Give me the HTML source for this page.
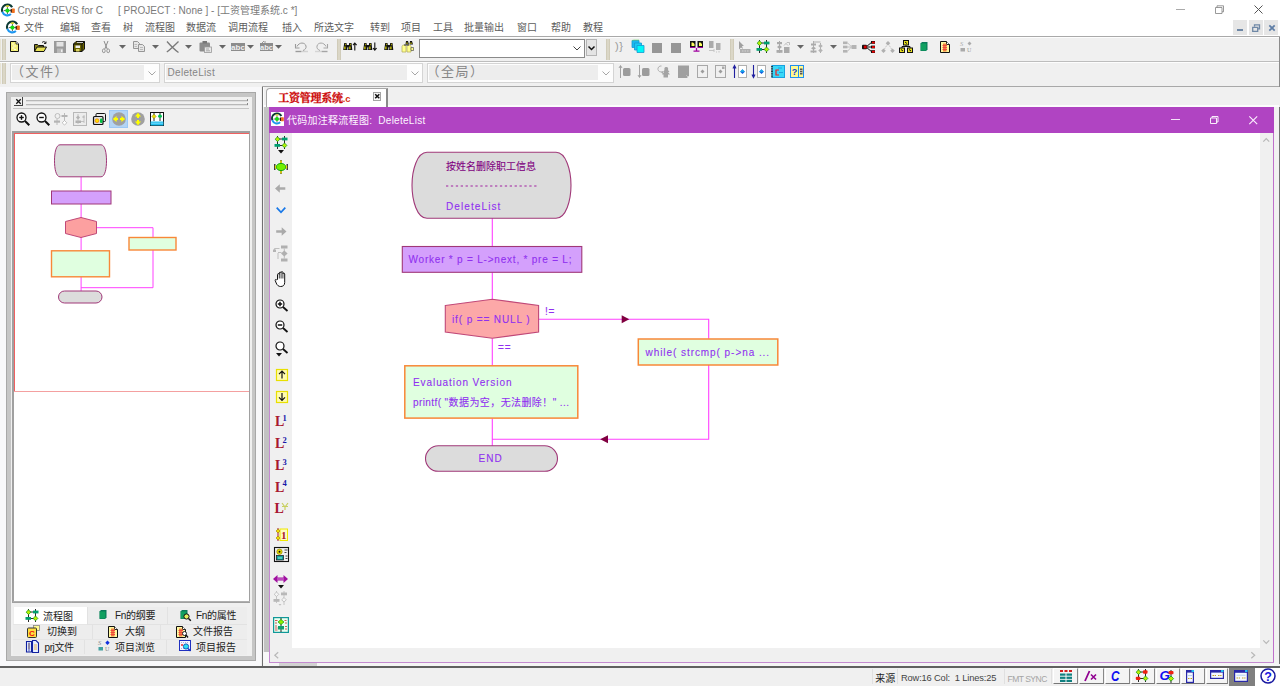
<!DOCTYPE html><html><head><meta charset="utf-8"><title>Crystal REVS for C</title><style>
*{box-sizing:border-box;margin:0;padding:0}
html,body{width:1280px;height:686px;overflow:hidden;background:#f0f0f0}
body{position:relative;font-family:"Liberation Sans","Noto Sans CJK SC",sans-serif;font-size:10px;color:#444}
.a{position:absolute}
.t{position:absolute;white-space:nowrap;line-height:1}
svg{position:absolute;overflow:visible}
.grip{position:absolute;width:4px;background:linear-gradient(90deg,#cbc6b2,#dedacb 45%,#dedacb 55%,#cbc6b2)}
.combo{position:absolute;background:#e6e6e6;border:1px solid #fbfbfb;outline:1px solid #dcdcdc;outline-offset:-2px}
</style></head><body>
<div class="a" style="left:0px;top:0px;width:1280px;height:19px;background:#fff;"></div>
<svg style="left:1.4px;top:2.7px" width="14.3" height="14.3" viewBox="0 0 14 14"><path d="M10.890 4.150A5.300 5.300 0 0 0 1.320 8.610" fill="none" stroke="#0c3a34" stroke-width="2.100"/><path d="M1.320 8.610A5.300 5.300 0 0 0 9.710 10.860" fill="none" stroke="#1e96f0" stroke-width="2"/><ellipse cx="6.300" cy="3.100" rx="1.900" ry=".8" fill="#d8d020"/><path d="M6.300 4v6.800M2.800 7.400h7" stroke="#222" stroke-width=".7"/><circle cx="6.300" cy="7.400" r="2.100" fill="#14dc14"/><rect x="9.400" y="5.800" width="1.600" height="3.600" fill="#2a1a10"/><rect x="10.600" y="5.500" width="2.900" height="4.200" rx=".6" fill="#f0701e"/></svg>
<div class="t" style="left:17.5px;top:5.5px;font-size:10px;color:#7a7a7a;">Crystal REVS for C</div>
<div class="t" style="left:118px;top:5.5px;font-size:10px;color:#7a7a7a;letter-spacing:0.02px">[ PROJECT : None ] - [工资管理系统.c *]</div>
<svg style="left:1176px;top:9px" width="9" height="1" viewBox="0 0 9 1"><rect width="9" height="1" fill="#aaa"/></svg>
<svg style="left:1215px;top:5px" width="9" height="9" viewBox="0 0 9 9"><path d="M.5 2.5h6.5v6h-6.5zM2 2.5V.8h6.5v6H7" fill="none" stroke="#808080" stroke-width=".8"/></svg>
<svg style="left:1254px;top:5px" width="9" height="9" viewBox="0 0 9 9"><path d="M.5.5l8 8M8.500 .5l-8 8" fill="none" stroke="#555" stroke-width="1"/></svg>
<div class="a" style="left:0px;top:19px;width:1280px;height:17px;background:#fff;"></div>
<div class="a" style="left:0px;top:36px;width:1280px;height:1px;background:#a9a9a9;"></div>
<svg style="left:5.8px;top:20.1px" width="14.3" height="14.3" viewBox="0 0 14 14"><path d="M10.890 4.150A5.300 5.300 0 0 0 1.320 8.610" fill="none" stroke="#0c3a34" stroke-width="2.100"/><path d="M1.320 8.610A5.300 5.300 0 0 0 9.710 10.860" fill="none" stroke="#1e96f0" stroke-width="2"/><ellipse cx="6.300" cy="3.100" rx="1.900" ry=".8" fill="#d8d020"/><path d="M6.300 4v6.800M2.800 7.400h7" stroke="#222" stroke-width=".7"/><circle cx="6.300" cy="7.400" r="2.100" fill="#14dc14"/><rect x="9.400" y="5.800" width="1.600" height="3.600" fill="#2a1a10"/><rect x="10.600" y="5.500" width="2.900" height="4.200" rx=".6" fill="#f0701e"/></svg>
<div class="t" style="left:24px;top:23px;font-size:10px;color:#5c5c5c;">文件</div>
<div class="t" style="left:60px;top:23px;font-size:10px;color:#5c5c5c;">编辑</div>
<div class="t" style="left:91px;top:23px;font-size:10px;color:#5c5c5c;">查看</div>
<div class="t" style="left:123px;top:23px;font-size:10px;color:#5c5c5c;">树</div>
<div class="t" style="left:145px;top:23px;font-size:10px;color:#5c5c5c;">流程图</div>
<div class="t" style="left:186px;top:23px;font-size:10px;color:#5c5c5c;">数据流</div>
<div class="t" style="left:228px;top:23px;font-size:10px;color:#5c5c5c;">调用流程</div>
<div class="t" style="left:282px;top:23px;font-size:10px;color:#5c5c5c;">插入</div>
<div class="t" style="left:314px;top:23px;font-size:10px;color:#5c5c5c;">所选文字</div>
<div class="t" style="left:370px;top:23px;font-size:10px;color:#5c5c5c;">转到</div>
<div class="t" style="left:401px;top:23px;font-size:10px;color:#5c5c5c;">项目</div>
<div class="t" style="left:433px;top:23px;font-size:10px;color:#5c5c5c;">工具</div>
<div class="t" style="left:464px;top:23px;font-size:10px;color:#5c5c5c;">批量输出</div>
<div class="t" style="left:517px;top:23px;font-size:10px;color:#5c5c5c;">窗口</div>
<div class="t" style="left:551px;top:23px;font-size:10px;color:#5c5c5c;">帮助</div>
<div class="t" style="left:583px;top:23px;font-size:10px;color:#5c5c5c;">教程</div>
<div class="a" style="left:1233px;top:20px;width:14px;height:15px;background:#e6e6e6;"></div>
<div class="a" style="left:1249px;top:20px;width:14px;height:15px;background:#e6e6e6;"></div>
<div class="a" style="left:1264px;top:20px;width:14px;height:15px;background:#e6e6e6;"></div>
<svg style="left:1237px;top:29px" width="6" height="2" viewBox="0 0 6 2"><rect width="6" height="2" fill="#6f88a6"/></svg>
<svg style="left:1252px;top:24px" width="8" height="8" viewBox="0 0 8 8"><path d="M2.500 2.500V.8h5v4H6M.7 3.300h5v4h-5z" fill="none" stroke="#6f88a6" stroke-width="1.300"/></svg>
<svg style="left:1269px;top:25px" width="6" height="6" viewBox="0 0 6 6"><path d="M.3.3l5.400 5.400M5.700.3L.3 5.700" fill="none" stroke="#5f7ea6" stroke-width="1.700"/></svg>
<div class="a" style="left:0px;top:37px;width:1280px;height:1px;background:#fdfdfd;"></div>
<div class="a" style="left:0px;top:61px;width:1280px;height:1px;background:#bdbdbd;"></div>
<div class="a" style="left:0px;top:62px;width:1280px;height:1px;background:#fdfdfd;"></div>
<div class="a" style="left:262px;top:86px;width:1017px;height:1px;background:#a8a8a8;"></div>
<div class="grip" style="left:2px;top:39px;height:21px"></div>
<div class="grip" style="left:336.5px;top:39px;height:21px"></div>
<div class="grip" style="left:605.5px;top:39px;height:21px"></div>
<div class="grip" style="left:730px;top:39px;height:21px"></div>
<div class="grip" style="left:2px;top:63px;height:21px"></div>
<div class="a" style="left:0px;top:39px;width:1px;height:21px;background:#e8e4d4;"></div>
<div class="a" style="left:0px;top:63px;width:1px;height:21px;background:#e8e4d4;"></div>
<div class="a" style="left:419px;top:39px;width:166px;height:19px;background:#fff;border:1px solid #8a8a8a"></div>
<svg style="left:573px;top:46px" width="8" height="5" viewBox="0 0 8 5"><path d="M.5.5l3.500 3.500l3.500-3.500" fill="none" stroke="#444" stroke-width="1"/></svg>
<div class="a" style="left:586px;top:39px;width:11px;height:17px;background:#e4e4e4;border:1px solid #b5b5b5"></div>
<svg style="left:588px;top:45.5px" width="7" height="4" viewBox="0 0 7 4"><path d="M.5.500l3 3l3-3" fill="none" stroke="#111" stroke-width="1.500"/></svg>
<div class="a" style="left:10px;top:63px;width:150px;height:19.700px;background:#fdfdfd;border:1px solid #d4d4d4"></div>
<div class="a" style="left:12px;top:65px;width:132px;height:15.200px;background:#ededed"></div>
<svg style="left:148px;top:70.5px" width="8" height="5" viewBox="0 0 8 5"><path d="M.5.5l3.500 3.500l3.500-3.500" fill="none" stroke="#a6a6a6" stroke-width="1"/></svg>
<div class="t" style="left:11px;top:65px;font-size:13px;color:#858585;letter-spacing:1.5px">（文件）</div>
<div class="a" style="left:164px;top:63px;width:258.5px;height:19.700px;background:#fdfdfd;border:1px solid #d4d4d4"></div>
<div class="a" style="left:166px;top:65px;width:240.5px;height:15.200px;background:#ededed"></div>
<svg style="left:410.5px;top:70.5px" width="8" height="5" viewBox="0 0 8 5"><path d="M.5.5l3.500 3.500l3.500-3.500" fill="none" stroke="#a6a6a6" stroke-width="1"/></svg>
<div class="t" style="left:167.5px;top:67.5px;font-size:10px;color:#858585;letter-spacing:0.3px">DeleteList</div>
<div class="a" style="left:427px;top:63px;width:186.5px;height:19.700px;background:#fdfdfd;border:1px solid #d4d4d4"></div>
<div class="a" style="left:429px;top:65px;width:168.5px;height:15.200px;background:#ededed"></div>
<svg style="left:601.5px;top:70.5px" width="8" height="5" viewBox="0 0 8 5"><path d="M.5.5l3.500 3.500l3.500-3.500" fill="none" stroke="#a6a6a6" stroke-width="1"/></svg>
<div class="t" style="left:426.5px;top:65px;font-size:13px;color:#858585;letter-spacing:1.5px">（全局）</div>
<div class="a" style="left:1279px;top:37px;width:1px;height:70px;background:#8c8c8c;"></div>
<svg style="left:10px;top:41px" width="9" height="11" viewBox="0 0 9 11"><path d="M.5.5h5.500l2.500 2.500v7.500h-8z" fill="#f4f07a" stroke="#111" stroke-width="1"/><path d="M6 .5v2.500h2.500" fill="#fff" stroke="#111" stroke-width=".8"/><path d="M2 3h2M3 5h3M2 7h2.500M4 8.500h2" stroke="#fffde0" stroke-width="1"/></svg>
<svg style="left:34px;top:41px" width="13" height="11" viewBox="0 0 13 11"><path d="M.5 10.500v-7h3l1 1h5v2" fill="#8a8420" stroke="#111" stroke-width="1"/><path d="M.5 10.500l2.500-4.500h9.500l-2.500 4.500z" fill="#e6e052" stroke="#111" stroke-width="1"/><path d="M8 1.500c1.500-1.500 3-1 3.500.5M12 .5v2h-2" fill="none" stroke="#111" stroke-width=".9"/></svg>
<svg style="left:54px;top:41px" width="12" height="12" viewBox="0 0 12 12"><rect x="0" y="0" width="12" height="12" fill="#9a9a9a"/><rect x="2.500" y="1" width="7" height="4.500" fill="#e2e2e2"/><rect x="3" y="7.500" width="6" height="4.500" fill="#b8b8b8"/><rect x="7" y="8.500" width="1.500" height="2.500" fill="#eee"/></svg>
<svg style="left:73px;top:41px" width="12" height="11" viewBox="0 0 12 11"><path d="M3 .5h8.500v7.500l-2.500 2.500h-8.500v-7.500z" fill="#6b6400" stroke="#111" stroke-width="1"/><path d="M.5 3h8.500v7.500M9 3l2.500-2.500" fill="none" stroke="#111" stroke-width="1"/><rect x="2.500" y="4.500" width="4.500" height="2.500" fill="#eee"/><rect x="3" y="8" width="3.500" height="2.500" fill="#d8d060"/><path d="M4 1.500h6" stroke="#ccc" stroke-width="1"/></svg>
<svg style="left:102px;top:41px" width="8" height="12" viewBox="0 0 8 12"><path d="M2 0l3.200 8M6 0L2.800 8" stroke="#8c8c8c" stroke-width="1" fill="none"/><ellipse cx="1.800" cy="9.800" rx="1.400" ry="1.900" fill="none" stroke="#8c8c8c" stroke-width=".9"/><ellipse cx="6.200" cy="9.800" rx="1.400" ry="1.900" fill="none" stroke="#8c8c8c" stroke-width=".9"/></svg>
<svg style="left:119px;top:45px" width="7" height="4" viewBox="0 0 7 4"><path d="M0 0h7l-3.500 3.800z" fill="#666"/></svg>
<svg style="left:133px;top:41px" width="12" height="11" viewBox="0 0 12 11"><path d="M.5.5h4l2 2v5h-6z" fill="#e6e6e6" stroke="#8c8c8c" stroke-width=".9"/><path d="M5.500 3.500h4l2 2v5h-6z" fill="#e6e6e6" stroke="#8c8c8c" stroke-width=".9"/><path d="M7 6.500h3M7 8.500h3M1.500 3.500h2.500M1.500 5.500h2.500" stroke="#b0b0b0" stroke-width=".8"/></svg>
<svg style="left:152px;top:45px" width="7" height="4" viewBox="0 0 7 4"><path d="M0 0h7l-3.500 3.800z" fill="#666"/></svg>
<svg style="left:166px;top:41px" width="14" height="12" viewBox="0 0 14 12"><path d="M1 .5C4 4 9 9 12.500 11.500M12.500 .5C9 4 5 8 .8 11" stroke="#7a7a7a" stroke-width="1.300" fill="none"/></svg>
<svg style="left:185px;top:45px" width="7" height="4" viewBox="0 0 7 4"><path d="M0 0h7l-3.500 3.800z" fill="#666"/></svg>
<svg style="left:199px;top:41px" width="13" height="12" viewBox="0 0 13 12"><rect x=".5" y="1.500" width="10.500" height="9" rx="1" fill="#8c8c8c"/><rect x="3.500" y="0" width="4.500" height="2.500" fill="#777"/><rect x="5.500" y="6" width="7" height="5.500" fill="#e8e8e8" stroke="#9a9a9a" stroke-width=".8"/><path d="M7 8h3M7 9.800h4" stroke="#999" stroke-width=".8"/></svg>
<svg style="left:219px;top:45px" width="7" height="4" viewBox="0 0 7 4"><path d="M0 0h7l-3.500 3.800z" fill="#666"/></svg>
<svg style="left:231px;top:43px" width="14" height="8" viewBox="0 0 14 8"><rect width="14" height="8" fill="#8c8c8c"/><text x="7" y="6.500" font-family="Liberation Sans,sans-serif" font-size="8" font-weight="bold" fill="#f0f0f0" text-anchor="middle">abc</text></svg>
<svg style="left:247px;top:45px" width="7" height="4" viewBox="0 0 7 4"><path d="M0 0h7l-3.500 3.800z" fill="#666"/></svg>
<svg style="left:260px;top:41px" width="13" height="10" viewBox="0 0 13 10"><rect y="2" width="13" height="8" fill="#8c8c8c"/><text x="6.500" y="8.500" font-family="Liberation Sans,sans-serif" font-size="7.500" font-weight="bold" fill="#f0f0f0" text-anchor="middle">abc</text><path d="M2 1l1.500 1.500M5 0v2M3 0l1 1" stroke="#8c8c8c" stroke-width=".9"/></svg>
<svg style="left:275px;top:45px" width="7" height="4" viewBox="0 0 7 4"><path d="M0 0h7l-3.500 3.800z" fill="#666"/></svg>
<svg style="left:295px;top:41px" width="13" height="12" viewBox="0 0 13 12"><path d="M2 5.500C4 1 10 1 11 5c.5 2-1 4-3 4.500" fill="none" stroke="#9a9a9a" stroke-width="1"/><path d="M.5 3v4h4" fill="none" stroke="#9a9a9a" stroke-width="1.100"/><path d="M.5 10.500h6" stroke="#9a9a9a" stroke-width="1.400"/><path d="M7.500 10.500h5" stroke="#b5b5b5" stroke-width="1.400" stroke-dasharray="1 1"/></svg>
<svg style="left:315px;top:41px" width="13" height="12" viewBox="0 0 13 12"><path d="M11 5.500C9 1 3 1 2 5c-.5 2 1 4 3 4.500" fill="none" stroke="#a5a5a5" stroke-width="1"/><path d="M12.500 3v4h-4" fill="none" stroke="#a5a5a5" stroke-width="1.100"/><path d="M6.500 10.500h6" stroke="#a5a5a5" stroke-width="1.400"/><path d="M.5 10.500h5" stroke="#bbb" stroke-width="1.400" stroke-dasharray="1 1"/></svg>
<svg style="left:343px;top:41.5px" width="14" height="9" viewBox="0 0 14 9"><path d="M1.200 1h2.300l1 7h-4.300zM6.200 1h2.300l.8 7h-4.300z" fill="#111"/><path d="M3 3h3.500v2.500h-3.500z" fill="#111"/><path d="M1.300 4.500h1.200v2.800h-1.200zM6.300 4.500h1.200v2.800h-1.200z" fill="#e6e000"/><path d="M2 1.800h.8v1.500h-.8zM7 1.800h.8v1.500h-.8z" fill="#c8c000"/><path d="M11.800 8.500v-7.500M10 3.200l1.800-2.200l1.800 2.200" stroke="#111" fill="none" stroke-width="1.100"/></svg>
<svg style="left:362.5px;top:41.5px" width="14" height="9" viewBox="0 0 14 9"><path d="M1.200 1h2.300l1 7h-4.300zM6.200 1h2.300l.8 7h-4.300z" fill="#111"/><path d="M3 3h3.500v2.500h-3.500z" fill="#111"/><path d="M1.300 4.500h1.200v2.800h-1.200zM6.300 4.500h1.200v2.800h-1.200z" fill="#e6e000"/><path d="M2 1.800h.8v1.500h-.8zM7 1.800h.8v1.500h-.8z" fill="#c8c000"/><path d="M11.800 .5v7.500M10 6l1.800 2.200l1.800-2.200" stroke="#111" fill="none" stroke-width="1.100"/></svg>
<svg style="left:384px;top:41.5px" width="14" height="9" viewBox="0 0 14 9"><path d="M1.200 1h2.300l1 7h-4.300zM6.200 1h2.300l.8 7h-4.300z" fill="#111"/><path d="M3 3h3.500v2.500h-3.500z" fill="#111"/><path d="M1.300 4.500h1.200v2.800h-1.200zM6.300 4.500h1.200v2.800h-1.200z" fill="#e6e000"/><path d="M2 1.800h.8v1.500h-.8zM7 1.800h.8v1.500h-.8z" fill="#c8c000"/></svg>
<svg style="left:401px;top:40px" width="13" height="13" viewBox="0 0 13 13"><path d="M5 1h2l1 3.500h-3.500zM9 1h2l1 3.500h-3.500z" fill="#111"/><path d="M5.500 2.500h1v1.500h-1zM9.500 2.500h1v1.500h-1z" fill="#e6e000"/><path d="M1 6.500c0-2 4-2 4 0v5.500h-4zM6 6.500c0-2 4-2 4 0v5.500h-4z" fill="#ffff8c" stroke="#b8b060" stroke-width=".8"/><path d="M10 7.500h2.500v3h-2.500z" fill="#ffff8c" stroke="#555" stroke-width=".7"/><path d="M3 5h5" stroke="#333" stroke-width="1"/></svg>
<div class="t" style="left:615px;top:41px;font-size:11px;color:#9a9a9a;letter-spacing:.5px">)}</div>
<svg style="left:631px;top:40px" width="14" height="13" viewBox="0 0 14 13"><path d="M1 .5h7v7h-7z" fill="#17b8f0" stroke="#1598d0" stroke-width=".8"/><path d="M3.500 3h7v7h-7z" fill="#17c8f8" stroke="#1598d0" stroke-width=".8"/><path d="M6 5.500h7v7h-7z" fill="#00f8f8" stroke="#1598d0" stroke-width=".8"/><path d="M1 .5l2-.5h5" stroke="#6ad86a" stroke-width=".6" fill="none"/></svg>
<div class="a" style="left:651.5px;top:43px;width:10.5px;height:9.5px;background:#969696;"></div>
<div class="a" style="left:671px;top:43px;width:9.5px;height:9.5px;background:#969696;"></div>
<svg style="left:690px;top:41px" width="13" height="11" viewBox="0 0 13 11"><rect x="0" y="0" width="5.500" height="6" fill="#111"/><rect x="7.500" y="0" width="5.500" height="6" fill="#111"/><path d="M1.500 1.500h1.500l1.500 1.500v2h-3zM9 1.500h1.500l1.500 1.500v2h-3z" fill="#ffff60"/><path d="M0 6.500h5.500M7.500 6.500h5.500" stroke="#a000a0" stroke-width="1.200"/><path d="M6.500 7v3M3.500 10.200h6" stroke="#a000a0" stroke-width="1.300"/></svg>
<svg style="left:708px;top:41px" width="13" height="12" viewBox="0 0 13 12"><rect x="1" y="0" width="4.500" height="7" fill="#aaa"/><rect x="8" y="2" width="4.500" height="7" fill="#b0b0b0"/><path d="M1 9.500h5M6 8v3M8 11h1M11 10v1.500" stroke="#c0c0c0" stroke-width=".9"/></svg>
<svg style="left:738px;top:41px" width="13" height="12" viewBox="0 0 13 12"><path d="M1 0v8.500l2-2l2 1.500l-1-3h2z" fill="#a0a0a0"/><rect x="2" y="8" width="10.500" height="4" fill="#b0b0b0"/><path d="M4 10h7" stroke="#ddd" stroke-width=".8" stroke-dasharray="1.500 1"/></svg>
<svg style="left:756px;top:40px" width="14" height="13" viewBox="0 0 14 13"><path d="M3.500 0v13M10.500 0v13M3.500 3h7M3.500 9.500h7" stroke="#111" stroke-width=".9" fill="none"/><path d="M3.500 .8l2.400 2.400l-2.400 2.400l-2.400-2.400z" fill="#b8f000" stroke="#18a018" stroke-width=".8"/><path d="M10.500 7l2.400 2.400l-2.400 2.400l-2.400-2.400z" fill="#b8f000" stroke="#18a018" stroke-width=".8"/><rect x="8" y="1.600" width="5.500" height="2.800" fill="#00a070"/><rect x=".5" y="8" width="5.500" height="2.800" fill="#00a070"/></svg>
<svg style="left:776px;top:41px" width="14" height="12" viewBox="0 0 14 12"><path d="M3.500 0v12" stroke="#aaa" stroke-width="1"/><rect x="1" y="1" width="5" height="2.200" fill="#aaa"/><path d="M3.500 4l2.500 2l-2.500 2l-2.500-2z" fill="#aaa"/><rect x=".5" y="9" width="6" height="2.800" fill="#aaa"/><rect x="8" y="6" width="5.500" height="6" fill="#aaa"/><path d="M8 4.500l3-3h2.500v2.500M10 2.500l2 2" stroke="#b8b8b8" stroke-width=".9" fill="none"/></svg>
<svg style="left:797px;top:45px" width="7" height="4" viewBox="0 0 7 4"><path d="M0 0h7l-3.500 3.800z" fill="#666"/></svg>
<svg style="left:810px;top:41px" width="14" height="12" viewBox="0 0 14 12"><path d="M3.500 0v12M10.500 2v10M3.500 1h7" stroke="#b0b0b0" stroke-width="1" fill="none"/><rect x="1" y="2.500" width="5" height="2" fill="#aaa"/><path d="M3.500 5.500l2.500 1.800l-2.500 1.800l-2.500-1.800z" fill="#aaa"/><rect x=".5" y="9.500" width="6" height="2" fill="#aaa"/><path d="M10.500 3l2.300 2l-2.300 2l-2.300-2zM10.500 7.500l2.300 2l-2.300 2l-2.300-2z" fill="#b4b4b4"/></svg>
<svg style="left:830px;top:45px" width="7" height="4" viewBox="0 0 7 4"><path d="M0 0h7l-3.500 3.800z" fill="#666"/></svg>
<svg style="left:843px;top:41px" width="14" height="12" viewBox="0 0 14 12"><rect x="0" y=".5" width="4.500" height="2.600" fill="#b4b4b4"/><rect x="0" y="4.700" width="4.500" height="2.600" fill="#b4b4b4"/><rect x="0" y="9" width="4.500" height="2.600" fill="#b4b4b4"/><rect x="8.500" y="4" width="5" height="4" fill="#b4b4b4"/><path d="M4.500 1.800l4 4l-4 4.500M4.500 6h4" stroke="#bcbcbc" stroke-width=".9" fill="none"/></svg>
<svg style="left:862px;top:41px" width="13" height="12" viewBox="0 0 13 12"><path d="M4 6l6-5M4 6h6M4 6l6 5" stroke="#111" stroke-width="1" fill="none"/><rect x="0" y="3.800" width="5" height="4.400" rx="1" fill="#111"/><rect x="1.800" y="4.600" width="2.800" height="2.800" fill="#e00000"/><rect x="9" y="0" width="4" height="2.800" fill="#111"/><rect x="9" y="4.600" width="4" height="2.800" fill="#111"/><rect x="9" y="9.200" width="4" height="2.800" fill="#111"/><rect x="10" y=".6" width="2.800" height="1.800" fill="#f00000"/><rect x="10" y="5.200" width="2.800" height="1.800" fill="#f00000"/><rect x="10" y="9.800" width="2.800" height="1.800" fill="#f00000"/></svg>
<svg style="left:881px;top:41px" width="14" height="12" viewBox="0 0 14 12"><path d="M7 2.500l-4.500 7M7 2.500l4.500 7" stroke="#bbb" stroke-width=".9" stroke-dasharray="1.500 1" fill="none"/><path d="M7 0l2.300 2.300l-2.300 2.300l-2.300-2.300zM2.500 7.400l2.300 2.300l-2.300 2.300l-2.300-2.300zM11.500 7.400l2.300 2.300l-2.300 2.300l-2.300-2.300z" fill="#b0b0b0"/></svg>
<svg style="left:899px;top:40px" width="14" height="13" viewBox="0 0 14 13"><path d="M7 4v2.500M3 8v-1.500h8v1.500" stroke="#111" stroke-width="1" fill="none"/><rect x="4.500" y=".5" width="5" height="4.500" fill="#e8e020" stroke="#111" stroke-width="1"/><rect x=".5" y="8" width="5" height="4.500" fill="#e8e020" stroke="#111" stroke-width="1"/><rect x="8.500" y="8" width="5" height="4.500" fill="#e8e020" stroke="#111" stroke-width="1"/><path d="M6 2l2 1.500M2 9.500l2 1.500M10 9.500l2 1.500" stroke="#111" stroke-width="1"/></svg>
<svg style="left:920px;top:42px" width="8" height="9" viewBox="0 0 8 9"><path d="M.5 1.500l1.500-1.500h5.500v7.500l-1.500 1.500h-5.500z" fill="#0a7a5a"/><rect x=".8" y="1.500" width="5.500" height="7" fill="#10a060"/></svg>
<svg style="left:940px;top:41px" width="10" height="12" viewBox="0 0 10 12"><path d="M.5.500h6l3 3v8h-9z" fill="#fff8a0" stroke="#111" stroke-width="1"/><path d="M6.500 .5v3h3" fill="#fff" stroke="#111" stroke-width=".9"/><rect x="3" y="2.500" width="3.500" height="8" fill="#f08040"/><path d="M2.500 4.500h4.500M2.500 6.500h4.500M2.500 8.500h4.500" stroke="#f04040" stroke-width=".9"/></svg>
<svg style="left:960px;top:41px" width="13" height="12" viewBox="0 0 13 12"><text x="0" y="5" font-family="Liberation Serif,serif" font-style="italic" font-size="6.500" fill="#aaa">S</text><path d="M9.500 .5l2 2l-2 2l-2-2z" fill="#aaa"/><rect x=".5" y="7" width="4.500" height="3.500" fill="#aaa"/><text x="7" y="11" font-family="Liberation Serif,serif" font-size="6" fill="#999">U</text></svg>
<svg style="left:619px;top:65px" width="12" height="13" viewBox="0 0 12 13"><path d="M1.500 1v12M0 3l1.500-2.500l1.500 2.500" stroke="#9a9a9a" stroke-width=".9" fill="none"/><rect x="4" y="3" width="7.500" height="8" rx="1.500" fill="#9c9c9c"/></svg>
<svg style="left:638px;top:65px" width="12" height="13" viewBox="0 0 12 13"><path d="M1.500 0v12M0 10l1.500 2.500l1.500-2.500" stroke="#9a9a9a" stroke-width=".9" fill="none"/><rect x="4" y="3" width="7.500" height="8" rx="1.500" fill="#9c9c9c"/></svg>
<svg style="left:657px;top:65px" width="14" height="13" viewBox="0 0 14 13"><path d="M4.500 1a3 3 0 1 0 1 5.500" fill="none" stroke="#aaa" stroke-width=".9"/><path d="M4 7.500l2-1.500v3z" fill="#aaa"/><path d="M9.500 2c1.500 0 2 1.500 1.500 3l1.500 2h-1.500l2 2.500h-2v3h-4.500v-3h-1.500l2-2.500h-1l1.500-2c-.5-1.500 0-3 1.500-3z" fill="#a4a4a4"/></svg>
<svg style="left:678px;top:65px" width="12" height="13" viewBox="0 0 12 13"><path d="M0 .5h11v10l-2 2.500h-9z" fill="#a0a0a0"/><path d="M8.500 10.500l1.200 1.200" stroke="#ddd" stroke-width="1"/></svg>
<svg style="left:697px;top:65px" width="11" height="13" viewBox="0 0 11 13"><rect x="0.5" y="0.5" width="10" height="12" fill="none" stroke="#a8a8a8" stroke-width="1"/><path d="M5.500 4.500l2 2l-2 2l-2-2z" fill="#9c9c9c"/></svg>
<svg style="left:715px;top:65px" width="11" height="13" viewBox="0 0 11 13"><rect x="0.5" y="0.5" width="10" height="12" fill="none" stroke="#a8a8a8" stroke-width="1"/><path d="M5.500 4.500l2 2l-2 2l-2-2z" fill="#9c9c9c"/><rect x="7" y="1.500" width="2.500" height="2.500" fill="#aaa"/></svg>
<svg style="left:733px;top:65px" width="14" height="13" viewBox="0 0 14 13"><path d="M1.500 1v12M0 3.500l1.500-3l1.500 3" stroke="#2020a0" stroke-width="1.100" fill="none"/><rect x="5.5" y="0.5" width="8" height="12" fill="#fff" stroke="#b0b0b0" stroke-width="1"/><path d="M9.500 4.300l2.400 2.400l-2.400 2.400l-2.400-2.400z" fill="#1060e0"/><path d="M9.500 4.300l2.400 2.400h-4.800z" fill="#18b0e8"/></svg>
<svg style="left:752px;top:65px" width="14" height="13" viewBox="0 0 14 13"><path d="M1.500 0v12M0 9.500l1.500 3l1.500-3" stroke="#2020a0" stroke-width="1.100" fill="none"/><rect x="5.5" y="0.5" width="8" height="12" fill="#fff" stroke="#b0b0b0" stroke-width="1"/><path d="M9.500 4.300l2.400 2.400l-2.400 2.400l-2.400-2.400z" fill="#1060e0"/><path d="M9.500 4.300l2.400 2.400h-4.800z" fill="#18b0e8"/></svg>
<svg style="left:771px;top:65px" width="14" height="13" viewBox="0 0 14 13"><rect x="1" y=".5" width="12.500" height="12" fill="#38d8f8" stroke="#18a0e0" stroke-width="1"/><path d="M1 1v11.500" stroke="#222" stroke-width="1.600" stroke-dasharray="1 .7"/><path d="M8 5h-3v5h3" fill="none" stroke="#f02020" stroke-width="1.200"/><path d="M7 3h4M8 7.500h4" stroke="#1898d8" stroke-width=".8"/></svg>
<svg style="left:790px;top:65px" width="14" height="13" viewBox="0 0 14 13"><rect x=".5" y=".5" width="13" height="12" fill="#fffa90" stroke="#2090f0" stroke-width="1"/><path d="M8.500 .5v12" stroke="#2090f0" stroke-width="1"/><text x="4.500" y="9.500" font-family="Liberation Sans,sans-serif" font-weight="bold" font-size="9" fill="#1040d0" text-anchor="middle">?</text><rect x="10" y="3.500" width="2.500" height="6" fill="#555"/><path d="M10 5.500h2.500M10 7.500h2.500" stroke="#ffe" stroke-width=".6"/></svg>
<div class="a" style="left:0px;top:87px;width:261px;height:579px;background:#f8f8fa;"></div>
<div class="a" style="left:6px;top:92px;width:250px;height:568.5px;background:#a8a8a8;"></div>
<div class="a" style="left:6.7px;top:92.7px;width:248.6px;height:567.1px;background:#c6c6c6;"></div>
<div class="a" style="left:11px;top:97px;width:241px;height:558.5px;background:#f0f0f0;"></div>
<div class="a" style="left:14px;top:97px;width:9px;height:9px;background:#f0f0f0;border-right:1px solid #444;border-bottom:1px solid #444"></div>
<svg style="left:15.5px;top:99px" width="5" height="5" viewBox="0 0 5 5"><path d="M.3.3l4.400 4.400M4.700.3L.3 4.700" stroke="#111" stroke-width="1.300" fill="none"/></svg>
<div class="a" style="left:26px;top:100px;width:222px;height:1px;background:#b8b8b8;"></div>
<div class="a" style="left:26px;top:101px;width:222px;height:1px;background:#e0e0e0;"></div>
<div class="a" style="left:26px;top:104px;width:222px;height:1px;background:#b8b8b8;"></div>
<div class="a" style="left:26px;top:105px;width:222px;height:1px;background:#e0e0e0;"></div>
<div class="a" style="left:247px;top:99px;width:1px;height:2px;background:#888;"></div>
<div class="a" style="left:247px;top:103px;width:1px;height:2px;background:#888;"></div>
<div class="a" style="left:13px;top:108px;width:236px;height:1px;background:#c4c4c4;"></div>
<svg style="left:16px;top:112px" width="14" height="14" viewBox="0 0 14 14"><circle cx="5.500" cy="5.500" r="4.500" fill="#fff" stroke="#111" stroke-width="1.300"/><path d="M9 9l4.300 4.300" stroke="#111" stroke-width="2"/><path d="M3.200 5.500h4.600" stroke="#111" stroke-width="1.400"/><path d="M5.500 3.200v4.600" stroke="#111" stroke-width="1.400"/></svg>
<svg style="left:36px;top:112px" width="14" height="14" viewBox="0 0 14 14"><circle cx="5.500" cy="5.500" r="4.500" fill="#fff" stroke="#111" stroke-width="1.300"/><path d="M9 9l4.300 4.300" stroke="#111" stroke-width="2"/><path d="M3.200 5.500h4.600" stroke="#111" stroke-width="1.400"/></svg>
<svg style="left:54px;top:113px" width="14" height="13" viewBox="0 0 14 13"><circle cx="3.500" cy="3" r="2.500" fill="none" stroke="#b8b8b8" stroke-width=".9"/><path d="M3 6v6M10.500 0v9" stroke="#b4b4b4" stroke-width=".9"/><rect x="7.500" y="2" width="6" height="2" fill="#b4b4b4"/><rect x="0" y="7.500" width="6" height="2.200" fill="#b4b4b4"/><path d="M10.500 7.500l2.300 2.300l-2.300 2.300l-2.300-2.300z" fill="#fff" stroke="#b4b4b4" stroke-width=".8"/></svg>
<svg style="left:73px;top:112px" width="14" height="14" viewBox="0 0 14 14"><rect x=".5" y=".5" width="13" height="13" fill="#ececec" stroke="#b8b8b8" stroke-width="1"/><path d="M5 3.500l2 2l-2 2l-2-2z" fill="#b0b0b0"/><rect x="2.500" y="8.500" width="5.500" height="2.500" fill="#b0b0b0"/><path d="M5 2v10M11 3v8M8 9.500h3" stroke="#b8b8b8" stroke-width=".8"/><rect x="9.500" y="4" width="2" height="2" fill="#c0c0c0"/></svg>
<svg style="left:93px;top:113px" width="13" height="12" viewBox="0 0 13 12"><rect x="3" y=".5" width="9.500" height="8" rx="1" fill="#eee" stroke="#111" stroke-width="1"/><rect x=".5" y="3.500" width="9.500" height="8" rx="1" fill="#ddd" stroke="#111" stroke-width="1.200"/><circle cx="4" cy="7.700" r="1.900" fill="#ffe000" stroke="#f08000" stroke-width=".7"/><rect x="7" y="5.500" width="2.500" height="4.500" rx="1" fill="#00c040"/></svg>
<div class="a" style="left:109px;top:110px;width:19px;height:18px;background:#b4d4f4;border:1px solid #9cc8f6"></div>
<svg style="left:112px;top:112px" width="14" height="14" viewBox="0 0 14 14"><circle cx="7" cy="7" r="6.800" fill="#a0a0a0"/><path d="M.8 7l3.800-3v2h4.800v-2l3.800 3l-3.800 3v-2h-4.800v2z" fill="#ffff00"/><rect x="6" y="5" width="2" height="4" fill="#a0a0a0"/></svg>
<svg style="left:131px;top:112px" width="14" height="14" viewBox="0 0 14 14"><circle cx="7" cy="7" r="6.800" fill="#a0a0a0"/><path d="M7 .8l3 3.800h-2v4.800h2l-3 3.800l-3-3.800h2v-4.800h-2z" fill="#ffff00"/><rect x="5" y="6" width="4" height="2" fill="#a0a0a0"/></svg>
<svg style="left:150px;top:112px" width="14" height="14" viewBox="0 0 14 14"><rect x=".5" y=".5" width="13" height="13" fill="#fff" stroke="#111" stroke-width="1"/><path d="M4 0v9M10 0v9" stroke="#111" stroke-width=".9"/><path d="M4 2.200l2.200 2.200l-2.200 2.200l-2.200-2.200z" fill="#f0e000" stroke="#808000" stroke-width=".5"/><ellipse cx="10" cy="4.200" rx="2" ry="1.600" fill="#00c050"/><rect x=".5" y="9.500" width="13" height="4" fill="#20c0f0"/><path d="M1 11.200h12" stroke="#90e0ff" stroke-width=".8"/></svg>
<div class="a" style="left:12px;top:131px;width:238px;height:471.5px;background:#a0a0a0;"></div>
<div class="a" style="left:14px;top:133px;width:235px;height:468.5px;background:#fff;"></div>
<div class="a" style="left:14px;top:133px;width:235px;height:1px;background:#f06060;"></div>
<div class="a" style="left:14px;top:133px;width:1px;height:258.5px;background:#f06060;"></div>
<div class="a" style="left:14px;top:391px;width:235px;height:1px;background:#f4a0a0;"></div>
<div class="a" style="left:13px;top:601px;width:237px;height:1px;background:#b0b0b0;"></div>
<svg style="left:14px;top:133px" width="235" height="260" viewBox="0 0 235 260"><path d="M67.100 44v14M67.100 71v14M67.100 104v13M67.100 144v14M82 94.700h57v60h-71.900" fill="none" stroke="#ff40ff" stroke-width="1"/><path d="M46 11.800h41c4 0 5.500 8.200 5.500 16s-1.500 16-5.500 16h-41c-4 0-5.500-8.200-5.500-16s1.500-16 5.500-16z" fill="#dcdcdc" stroke="#a03878" stroke-width="1"/><rect x="37.500" y="58" width="59.500" height="13" fill="#d4a0fc" stroke="#a03878" stroke-width="1"/><path d="M51.500 88.500l15.500-4l15.500 4v12l-15.500 4l-15.500-4z" fill="#fca0a0" stroke="#c04878" stroke-width="1"/><rect x="115" y="104.500" width="47" height="12.500" fill="#e0ffe0" stroke="#f88838" stroke-width="1.400"/><rect x="37.500" y="117.800" width="58" height="26" fill="#e0ffe0" stroke="#f88838" stroke-width="1.400"/><rect x="44.500" y="158" width="43.500" height="12" rx="6" fill="#dcdcdc" stroke="#a03878" stroke-width="1"/></svg>
<div class="a" style="left:13px;top:607px;width:234px;height:48px;background:#ededed;"></div>
<div class="a" style="left:13.5px;top:607px;width:73px;height:17px;background:#fff;"></div>
<div class="a" style="left:87px;top:607px;width:1px;height:17px;background:#e2e2e2;"></div>
<div class="a" style="left:167px;top:607px;width:1px;height:17px;background:#e2e2e2;"></div>
<div class="a" style="left:92px;top:624px;width:1px;height:15px;background:#e2e2e2;"></div>
<div class="a" style="left:160px;top:624px;width:1px;height:15px;background:#e2e2e2;"></div>
<div class="a" style="left:84px;top:639px;width:1px;height:15px;background:#e2e2e2;"></div>
<div class="a" style="left:166px;top:639px;width:1px;height:15px;background:#e2e2e2;"></div>
<div class="a" style="left:13px;top:623.5px;width:234px;height:1px;background:#e6e6e6;"></div>
<div class="a" style="left:13px;top:638.5px;width:234px;height:1px;background:#e6e6e6;"></div>
<div class="a" style="left:87px;top:623.5px;width:160px;height:1px;background:#e2e2e2;"></div>
<svg style="left:25px;top:609px" width="14" height="13" viewBox="0 0 14 13"><path d="M3.500 0v13M10.500 0v13M3.500 3h7M3.500 9.500h7" stroke="#111" stroke-width=".9" fill="none"/><path d="M3.500 .8l2.400 2.400l-2.400 2.400l-2.400-2.400z" fill="#b8f000" stroke="#18a018" stroke-width=".8"/><path d="M10.500 7l2.400 2.400l-2.400 2.400l-2.400-2.400z" fill="#b8f000" stroke="#18a018" stroke-width=".8"/><rect x="8" y="1.600" width="5.500" height="2.800" fill="#00a070"/><rect x=".5" y="8" width="5.500" height="2.800" fill="#00a070"/></svg>
<div class="t" style="left:43px;top:611.5px;font-size:10px;color:#222;">流程图</div>
<svg style="left:99px;top:610px" width="8" height="9" viewBox="0 0 8 9"><path d="M.5 1.500l1.500-1.500h5.500v7.500l-1.500 1.500h-5.500z" fill="#0a7a5a"/><rect x=".8" y="1.500" width="5.500" height="7" fill="#10a060"/></svg>
<div class="t" style="left:115px;top:611px;font-size:10px;color:#222;letter-spacing:-.3px">Fn的纲要</div>
<svg style="left:180px;top:610px" width="11" height="11" viewBox="0 0 11 11"><path d="M.5 1.500l1.500-1.500h5.500v7.500l-1.500 1.500h-5.500z" fill="#0a7a5a"/><rect x=".8" y="1.500" width="5.500" height="7" fill="#10a060"/><circle cx="6.500" cy="6.500" r="2.600" fill="#e0f060" stroke="#111" stroke-width="1"/><path d="M8.500 8.500l2.300 2.300" stroke="#111" stroke-width="1.500"/></svg>
<div class="t" style="left:196px;top:611px;font-size:10px;color:#222;letter-spacing:-.3px">Fn的属性</div>
<svg style="left:27px;top:625px" width="13" height="13" viewBox="0 0 13 13"><rect x="6.500" y=".5" width="6" height="5" fill="#fffa90" stroke="#888" stroke-width=".8"/><rect x=".5" y="3" width="9" height="9.500" rx="1" fill="#ffe040" stroke="#333" stroke-width="1"/><text x="5" y="11" font-family="Liberation Sans,sans-serif" font-size="8" font-weight="bold" fill="#f01010" text-anchor="middle">C</text></svg>
<div class="t" style="left:47px;top:626.7px;font-size:10px;color:#222;">切换到</div>
<svg style="left:108px;top:625.5px" width="10" height="12" viewBox="0 0 10 12"><path d="M.5.500h6l3 3v8h-9z" fill="#fff8a0" stroke="#111" stroke-width="1"/><path d="M6.500 .5v3h3" fill="#fff" stroke="#111" stroke-width=".9"/><rect x="3" y="2.500" width="3.500" height="8" fill="#f08040"/><path d="M2.500 4.500h4.500M2.500 6.500h4.500M2.500 8.500h4.500" stroke="#f04040" stroke-width=".9"/></svg>
<div class="t" style="left:125px;top:626.7px;font-size:10px;color:#222;">大纲</div>
<svg style="left:176px;top:625.5px" width="10" height="12" viewBox="0 0 10 12"><path d="M.5.500h6l3 3v8h-9z" fill="#fff8a0" stroke="#111" stroke-width="1"/><path d="M6.500 .5v3h3" fill="#fff" stroke="#111" stroke-width=".9"/><rect x="3" y="2.500" width="3.500" height="8" fill="#f08040"/><path d="M2.500 4.500h4.500M2.500 6.500h4.500M2.500 8.500h4.500" stroke="#f04040" stroke-width=".9"/></svg>
<svg style="left:182px;top:631px" width="6" height="7" viewBox="0 0 6 7"><circle cx="2.500" cy="2.500" r="2" fill="#fff" stroke="#111" stroke-width=".9"/><path d="M4 4l2 2.500" stroke="#111" stroke-width="1.300"/></svg>
<div class="t" style="left:193px;top:626.7px;font-size:10px;color:#222;">文件报告</div>
<svg style="left:26px;top:640px" width="13" height="13" viewBox="0 0 13 13"><path d="M.5 1.500h5v10.500h-5zM6.500 .5h3.500l2.500 2.500v9.500h-6z" fill="#e8f0ff" stroke="#1020a0" stroke-width="1.100"/><path d="M2 4h2M2 6h2M2 8h2M8 5h3M8 7h3M8 9h3" stroke="#e0a030" stroke-width=".8"/><path d="M3 2.500v9" stroke="#1020a0" stroke-width=".8"/></svg>
<div class="t" style="left:44.5px;top:642.5px;font-size:10px;color:#222;letter-spacing:-.4px">prj文件</div>
<svg style="left:97.5px;top:640px" width="13" height="13" viewBox="0 0 13 13"><text x="0" y="5" font-family="Liberation Serif,serif" font-style="italic" font-size="6.500" fill="#888">S</text><path d="M9.500 .5l2.200 2.200l-2.200 2.200l-2.200-2.200z" fill="#1030e0"/><rect x=".5" y="7" width="4.500" height="3.500" fill="#40a0a0"/><text x="7" y="11" font-family="Liberation Serif,serif" font-size="6" fill="#888">U</text></svg>
<div class="t" style="left:115px;top:642.5px;font-size:10px;color:#222;">项目浏览</div>
<svg style="left:179px;top:640px" width="13" height="12" viewBox="0 0 13 12"><rect x=".5" y=".5" width="11" height="10" fill="#f8f8ff" stroke="#2030c0" stroke-width="1"/><path d="M2 2.500h8M2 8.500h4" stroke="#9090d0" stroke-width=".7" stroke-dasharray="1 1"/><circle cx="7" cy="6.500" r="2.600" fill="#30e0f0" stroke="#1060c0" stroke-width="1"/><path d="M9 8.500l2.500 2.500" stroke="#1030c0" stroke-width="1.400"/><rect x="2" y="4" width="2" height="2" fill="#f06060"/></svg>
<div class="t" style="left:196px;top:642.5px;font-size:10px;color:#222;">项目报告</div>
<div class="a" style="left:263px;top:87px;width:1017px;height:580px;background:#f0f0f0;"></div>
<div class="a" style="left:261.5px;top:87px;width:1.5px;height:580px;background:#707070;"></div>
<div class="a" style="left:263px;top:87px;width:1px;height:20px;background:#fcfcfc;"></div>
<div class="a" style="left:1279px;top:107px;width:1px;height:557px;background:#707070;"></div>
<div class="a" style="left:263px;top:105px;width:1016px;height:2px;background:#fcfcfc;"></div>
<div class="a" style="left:263.5px;top:107px;width:5px;height:545px;background:#c2c2c2;"></div>
<div class="a" style="left:263px;top:652px;width:6px;height:14.5px;background:#f8f8f8;"></div>
<div class="a" style="left:1274px;top:107px;width:5px;height:560px;background:#f2f2f2;"></div>
<div class="a" style="left:263px;top:663px;width:1016px;height:3.5px;background:#f5f5f5;"></div>
<div class="a" style="left:279px;top:663px;width:38px;height:2.5px;background:#d2d2d2;"></div>
<div class="a" style="left:266px;top:88px;width:122px;height:18.500px;background:#fff;border:1px solid #a8a8a8;border-bottom:none;border-right:2px solid #8a8a8a;border-radius:4px 0 0 0"></div>
<div class="t" style="left:278.3px;top:93px;font-size:11px;color:#cc0808;font-weight:bold;font-family:'Liberation Sans','Noto Serif CJK SC',serif;letter-spacing:-.25px;-webkit-text-stroke:.3px #cc0808">工资管理系统<span style="font-family:'Liberation Sans',sans-serif;font-size:9.500px;color:#d83010;-webkit-text-stroke:0">.c</span></div>
<div class="a" style="left:372.500px;top:92px;width:8.500px;height:8.500px;background:#f6f6f6;border:1px solid #a4a4a4"></div>
<svg style="left:374.5px;top:94px" width="4.5" height="4.5" viewBox="0 0 4.5 4.5"><path d="M.2.200l4.100 4.100M4.300.2L.2 4.300" stroke="#111" stroke-width="1.500" fill="none"/></svg>
<div class="a" style="left:268.5px;top:106.5px;width:1005.5px;height:556px;background:#c48ad0;"></div>
<div class="a" style="left:268.5px;top:106.5px;width:1005.5px;height:26px;background:#b044c2;"></div>
<div class="a" style="left:270px;top:132.5px;width:1002.5px;height:529px;background:#f0f0f0;"></div>
<div class="a" style="left:292px;top:132.5px;width:968px;height:515.5px;background:#fff;"></div>
<div class="a" style="left:1273px;top:132.5px;width:1px;height:529px;background:#c070cc;"></div>
<div class="a" style="left:271px;top:112px;width:13px;height:14px;background:#fff;"></div>
<svg style="left:271.2px;top:112px" width="13.3" height="13.3" viewBox="0 0 14 14"><path d="M10.890 4.150A5.300 5.300 0 0 0 1.320 8.610" fill="none" stroke="#0c3a34" stroke-width="2.100"/><path d="M1.320 8.610A5.300 5.300 0 0 0 9.710 10.860" fill="none" stroke="#1e96f0" stroke-width="2"/><ellipse cx="6.300" cy="3.100" rx="1.900" ry=".8" fill="#d8d020"/><path d="M6.300 4v6.800M2.800 7.400h7" stroke="#222" stroke-width=".7"/><circle cx="6.300" cy="7.400" r="2.100" fill="#14dc14"/><rect x="9.400" y="5.800" width="1.600" height="3.600" fill="#2a1a10"/><rect x="10.600" y="5.500" width="2.900" height="4.200" rx=".6" fill="#f0701e"/></svg>
<div class="t" style="left:287px;top:116px;font-size:10px;color:#fdf4ff;letter-spacing:.27px">代码加注释流程图:&nbsp; DeleteList</div>
<svg style="left:1171px;top:119px" width="9" height="1" viewBox="0 0 9 1"><rect width="9" height="1" fill="#f4e4f8"/></svg>
<svg style="left:1209.5px;top:116px" width="8.5" height="8" viewBox="0 0 8.5 8"><path d="M.5 2h6v5.500h-6zM2 2V.5h6v5.500H6.500" fill="none" stroke="#f8ecfa" stroke-width="1"/></svg>
<svg style="left:1249px;top:115.5px" width="8.5" height="8.5" viewBox="0 0 8.5 8.5"><path d="M.3.300l7.900 7.900M8.200.3L.3 8.200" fill="none" stroke="#fbf0fd" stroke-width="1.100"/></svg>
<svg style="left:1263px;top:138px" width="6.5" height="4" viewBox="0 0 6.5 4"><path d="M.3 3.700l2.950-3l2.950 3" fill="none" stroke="#b8b8b8" stroke-width="1.200"/></svg>
<svg style="left:1263px;top:640px" width="6.5" height="4" viewBox="0 0 6.5 4"><path d="M.3.300l2.950 3l2.950-3" fill="none" stroke="#b8b8b8" stroke-width="1.200"/></svg>
<svg style="left:274px;top:652px" width="4.5" height="6.5" viewBox="0 0 4.5 6.5"><path d="M4.200.3l-3.400 2.950l3.400 2.950" fill="none" stroke="#b8b8b8" stroke-width="1.200"/></svg>
<svg style="left:1250.5px;top:651.5px" width="4.5" height="6.5" viewBox="0 0 4.5 6.5"><path d="M.3.300l3.400 2.950l-3.400 2.950" fill="none" stroke="#b8b8b8" stroke-width="1.200"/></svg>
<svg style="left:292px;top:133px" width="968" height="515" viewBox="0 0 968 515"><path d="M200.300 85v28.500M200.300 139v27.500M200.300 205.500v27M200.300 285.500v27.500M246.500 186.300h170.200v19.500M416.700 232v74.300h-216.400" fill="none" stroke="#ff40ff" stroke-width="1.100"/><path d="M135 19.300h129c10 0 15 18 15 33s-5 33-15 33h-129c-10 0-15-18-15-33s5-33 15-33z" fill="#dcdcdc" stroke="#a03878" stroke-width="1.100"/><path d="M154 53h92" stroke="#a020a0" stroke-width="1" stroke-dasharray="2.300 2.600" stroke-dashoffset="0"/><rect x="110.300" y="113.500" width="179.500" height="25.800" fill="#d4a0fc" stroke="#a03878" stroke-width="1.100"/><path d="M153.300 172.500l47-6.300l46.300 6.300v26.500l-46.300 6.300l-47-6.300z" fill="#fca8a8" stroke="#c04878" stroke-width="1.100"/><rect x="346.300" y="206" width="139.500" height="26" fill="#e0ffe0" stroke="#f88838" stroke-width="1.500"/><rect x="112.800" y="232.800" width="173" height="52.300" fill="#e0ffe0" stroke="#f88838" stroke-width="1.500"/><rect x="133.500" y="312.800" width="132" height="25.500" rx="12.750" fill="#dcdcdc" stroke="#a03878" stroke-width="1.100"/><path d="M329.700 182.300l7.600 4l-7.600 4z" fill="#800040"/><path d="M316 302.300l-7.800 4l7.800 4z" fill="#800040"/></svg>
<div class="t" style="left:446px;top:162px;font-size:10px;color:#800080;letter-spacing:0px;-webkit-text-stroke:.1px #800080">按姓名删除职工信息</div>
<div class="t" style="left:446px;top:201.5px;font-size:10px;color:#9030f0;letter-spacing:1.1px;-webkit-text-stroke:.1px #9030f0">DeleteList</div>
<div class="t" style="left:408.5px;top:254.5px;font-size:10px;color:#9030f0;letter-spacing:0.79px;-webkit-text-stroke:.1px #9030f0">Worker * p = L-&gt;next, * pre = L;</div>
<div class="t" style="left:452px;top:314.5px;font-size:10px;color:#9030f0;letter-spacing:0.88px;-webkit-text-stroke:.1px #9030f0">if( p == NULL )</div>
<div class="t" style="left:545px;top:306.5px;font-size:10px;color:#9030f0;letter-spacing:0.8px;-webkit-text-stroke:.1px #9030f0">!=</div>
<div class="t" style="left:498px;top:342.5px;font-size:10px;color:#9030f0;letter-spacing:0.8px;-webkit-text-stroke:.1px #9030f0">==</div>
<div class="t" style="left:413px;top:377.5px;font-size:10px;color:#9030f0;letter-spacing:0.92px;-webkit-text-stroke:.1px #9030f0">Evaluation Version</div>
<div class="t" style="left:413px;top:398.3px;font-size:10px;color:#9030f0;letter-spacing:0.41px;-webkit-text-stroke:.1px #9030f0">printf( &quot;数据为空，无法删除！&quot; ...</div>
<div class="t" style="left:645.5px;top:348px;font-size:10px;color:#9030f0;letter-spacing:0.94px;-webkit-text-stroke:.1px #9030f0">while( strcmp( p-&gt;na ...</div>
<div class="t" style="left:478.5px;top:454px;font-size:10px;color:#9030f0;letter-spacing:1.0px;-webkit-text-stroke:.1px #9030f0">END</div>
<svg style="left:273.5px;top:136px" width="14" height="13" viewBox="0 0 14 13"><path d="M3.500 0v13M10.500 0v13M3.500 3h7M3.500 9.500h7" stroke="#111" stroke-width=".9" fill="none"/><path d="M3.500 .8l2.400 2.400l-2.400 2.400l-2.400-2.400z" fill="#b8f000" stroke="#18a018" stroke-width=".8"/><path d="M10.500 7l2.400 2.400l-2.400 2.400l-2.400-2.400z" fill="#b8f000" stroke="#18a018" stroke-width=".8"/><rect x="8" y="1.600" width="5.500" height="2.800" fill="#00a070"/><rect x=".5" y="8" width="5.500" height="2.800" fill="#00a070"/></svg>
<svg style="left:277.5px;top:150px" width="6" height="3.5" viewBox="0 0 6 3.5"><path d="M0 0h6l-3 3.500z" fill="#111"/></svg>
<svg style="left:274px;top:160px" width="14" height="14" viewBox="0 0 14 14"><path d="M7 0v14M.8 4v6M13.200 4v6" stroke="#111" stroke-width="1.200"/><path d="M7 .5v2.500M7 11v2.500" stroke="#e8d800" stroke-width="1.600"/><ellipse cx="7" cy="7" rx="4.800" ry="3.600" fill="#70f000" stroke="#10a010" stroke-width="1"/><path d="M1.500 5.500v3M12.500 5.500v3" stroke="#e8d800" stroke-width="1.200"/></svg>
<svg style="left:275px;top:183.5px" width="10.5" height="9" viewBox="0 0 10.5 9"><path d="M0 4.500l4.800-4.300v3.100h5.500v2.400h-5.500v3.100z" fill="#aaaaaa"/></svg>
<svg style="left:276px;top:207px" width="10" height="7" viewBox="0 0 10 7"><path d="M.7.700l4.300 4.600l4.300-4.600" fill="none" stroke="#1878e8" stroke-width="1.700"/></svg>
<svg style="left:275.5px;top:226.5px" width="10.5" height="9" viewBox="0 0 10.5 9"><path d="M10.500 4.500l-4.800-4.300v3.100h-5.500v2.400h5.500v3.100z" fill="#aaaaaa"/></svg>
<svg style="left:272px;top:244.5px" width="17" height="17" viewBox="0 0 17 17"><rect x="9" y=".5" width="6.500" height="3" fill="#b0b0b0"/><path d="M12.300 3.500v10M6 7.500h3.500M2.500 5v-1.500h5M6 8v6" stroke="#b8b8b8" stroke-width=".9" fill="none"/><rect x="1" y="4.500" width="3" height="2.500" fill="#b4b4b4"/><path d="M12.300 5.500l3.300 3l-3.300 3l-3.300-3z" fill="#b0b0b0"/><rect x="9" y="13.500" width="6.500" height="3" fill="#b0b0b0"/></svg>
<svg style="left:274.5px;top:271px" width="12" height="16" viewBox="0 0 12 16"><path d="M2.500 8.500v-5c0-1.200 1.800-1.200 1.800 0v-1.500c0-1.200 1.800-1.200 1.800 0v-.5c0-1.200 1.800-1.200 1.800 0v1.500c0-1.200 1.800-1.200 1.800 0v8.500c0 3-2 4-4 4s-3.500-1-4.500-3.500l-1-2.500c-.3-1 1-1.600 1.500-.5z" fill="#fff" stroke="#111" stroke-width="1"/><path d="M4.300 3.500v4M6.100 2v5.500M7.900 3v4.500" stroke="#111" stroke-width=".8"/></svg>
<svg style="left:275px;top:298.5px" width="13" height="13" viewBox="0 0 13 13"><circle cx="5" cy="5" r="4" fill="#fff" stroke="#111" stroke-width="1.200"/><path d="M8 8l4.500 4" stroke="#111" stroke-width="1.800"/><path d="M2.800 5h4.400" stroke="#111" stroke-width="1.500"/><path d="M5 2.800v4.400" stroke="#111" stroke-width="1.500"/></svg>
<svg style="left:275px;top:320px" width="13" height="13" viewBox="0 0 13 13"><circle cx="5" cy="5" r="4" fill="#fff" stroke="#111" stroke-width="1.200"/><path d="M8 8l4.500 4" stroke="#111" stroke-width="1.800"/><path d="M2.800 5h4.400" stroke="#111" stroke-width="1.500"/></svg>
<svg style="left:275px;top:341px" width="13" height="13" viewBox="0 0 13 13"><circle cx="5" cy="5" r="4" fill="#fff" stroke="#111" stroke-width="1.200"/><path d="M8 8l4.500 4" stroke="#111" stroke-width="1.800"/></svg>
<svg style="left:276px;top:352.5px" width="6" height="3.5" viewBox="0 0 6 3.5"><path d="M0 0h6l-3 3.500z" fill="#111"/></svg>
<svg style="left:275.5px;top:369px" width="12" height="12" viewBox="0 0 12 12"><rect x=".5" y=".5" width="11" height="11" fill="#fffcb0" stroke="#e8e000" stroke-width="1.200"/><path d="M6 9.500v-7M3 5.200l3-3l3 3" stroke="#111" stroke-width="1.200" fill="none"/></svg>
<svg style="left:275.5px;top:390.5px" width="12" height="12" viewBox="0 0 12 12"><rect x=".5" y=".5" width="11" height="11" fill="#fffcb0" stroke="#e8e000" stroke-width="1.200"/><path d="M6 2v7M3 6.300l3 3l3-3" stroke="#111" stroke-width="1.200" fill="none"/></svg>
<div class="t" style="left:275px;top:415px;font-family:'Liberation Serif',serif;font-weight:bold;font-size:14px;color:#a81830">L<span style="position:absolute;left:7.500px;top:-1.500px;font-size:8.500px;font-weight:bold;color:#1818a8;font-family:'Liberation Serif',serif">1</span></div>
<div class="t" style="left:275px;top:437px;font-family:'Liberation Serif',serif;font-weight:bold;font-size:14px;color:#a81830">L<span style="position:absolute;left:7.500px;top:-1.500px;font-size:8.500px;font-weight:bold;color:#1818a8;font-family:'Liberation Serif',serif">2</span></div>
<div class="t" style="left:275px;top:459px;font-family:'Liberation Serif',serif;font-weight:bold;font-size:14px;color:#a81830">L<span style="position:absolute;left:7.500px;top:-1.500px;font-size:8.500px;font-weight:bold;color:#1818a8;font-family:'Liberation Serif',serif">3</span></div>
<div class="t" style="left:275px;top:480.5px;font-family:'Liberation Serif',serif;font-weight:bold;font-size:14px;color:#a81830">L<span style="position:absolute;left:7.500px;top:-1.500px;font-size:8.500px;font-weight:bold;color:#1818a8;font-family:'Liberation Serif',serif">4</span></div>
<div class="t" style="left:274.500px;top:502px;font-family:'Liberation Serif',serif;font-weight:bold;font-size:14px;color:#a81830">L</div>
<svg style="left:282px;top:502.5px" width="6" height="7" viewBox="0 0 6 7"><path d="M0 0l3 4l3-4M3 4v3M0 3.500h6" stroke="#c8d060" stroke-width="1.200" fill="none"/></svg>
<svg style="left:274.5px;top:528px" width="13" height="13" viewBox="0 0 13 13"><rect x="5" y="1" width="7.500" height="11.500" fill="#fffcc0" stroke="#f0e800" stroke-width="1"/><path d="M3 0v13" stroke="#a81830" stroke-width="1"/><path d="M3 1l2 2l-2 2l-2-2zM3 8l2 2l-2 2l-2-2z" fill="#f0e000" stroke="#a08000" stroke-width=".6"/><text x="6" y="11" font-family="Liberation Serif,serif" font-weight="bold" font-size="11" fill="#a81830">1</text></svg>
<svg style="left:273.5px;top:547px" width="15" height="15" viewBox="0 0 15 15"><rect x=".5" y=".5" width="14" height="14" fill="#f0f0f0" stroke="#111" stroke-width="1.100"/><circle cx="5.500" cy="4.700" r="2.700" fill="#e8e000" stroke="#807000" stroke-width=".6"/><circle cx="5.500" cy="4.700" r="1" fill="#111"/><rect x="2.500" y="8.500" width="7" height="4.500" fill="#10a0a0" stroke="#111" stroke-width=".7"/><path d="M4 11h4" stroke="#a0ffe0" stroke-width=".9"/><path d="M10.500 3h3M10.500 5.500h2M11.500 9h2M11.500 11.500h2" stroke="#333" stroke-width=".9"/></svg>
<svg style="left:273px;top:575px" width="15" height="8" viewBox="0 0 15 8"><path d="M0 4l4.500-4v2.500h6v-2.500l4.500 4l-4.500 4v-2.500h-6v2.500z" fill="#a010a0"/><path d="M4 4h7" stroke="#e8a0e8" stroke-width=".8"/></svg>
<svg style="left:277.5px;top:584.5px" width="6" height="3.5" viewBox="0 0 6 3.5"><path d="M0 0h6l-3 3.500z" fill="#111"/></svg>
<svg style="left:272.5px;top:591px" width="15" height="15" viewBox="0 0 15 15"><path d="M3.500 0v12M11 0v14" stroke="#c0c0c0" stroke-width=".9"/><path d="M3.500 1l2.300 2.300l-2.300 2.300l-2.300-2.300z" fill="#f4f4f4" stroke="#b8b8b8" stroke-width=".8"/><rect x="8" y="1.500" width="6" height="2.800" fill="#b8b8b8"/><rect x=".5" y="8" width="6" height="2.800" fill="#b8b8b8"/><path d="M11 6.500l2.300 2.300l-2.300 2.300l-2.300-2.300z" fill="#f4f4f4" stroke="#b8b8b8" stroke-width=".8"/><path d="M5.500 13h3l-1.500 1.800z" fill="#c0c0c0"/></svg>
<svg style="left:272.5px;top:617px" width="16" height="16" viewBox="0 0 16 16"><rect x=".6" y=".6" width="14.800" height="14.800" fill="#e8fff0" stroke="#109898" stroke-width="1.200"/><path d="M8 1v14" stroke="#111" stroke-width=".9"/><path d="M8 2.500l3 2.500l-3 2.500l-3-2.500z" fill="#90f000" stroke="#10a010" stroke-width=".7"/><rect x="5" y="9" width="6" height="3.500" fill="#10a070"/><path d="M2 3.500h2.500M2 6h2M11.500 3.500h2M12 6h2M2 9h2M2 11h2.500M2 13h2.500M12 9.500h2M12 12h2" stroke="#d04040" stroke-width=".9"/></svg>
<div class="a" style="left:0px;top:666.2px;width:1280px;height:1.5px;background:#606060;"></div>
<div class="a" style="left:0px;top:667.5px;width:1280px;height:18.5px;background:#f0f0f0;"></div>
<div class="t" style="left:875.3px;top:674px;font-size:10px;color:#222;">来源</div>
<div class="t" style="left:901px;top:674.3px;font-size:9.3px;color:#444;letter-spacing:-.15px">Row:16 Col:&nbsp; 1 Lines:25</div>
<div class="t" style="left:1007.5px;top:675px;font-size:8.5px;color:#a4a4a4;letter-spacing:-.5px">FMT SYNC</div>
<div class="a" style="left:872px;top:669px;width:1px;height:15px;background:#e0e0e0;"></div>
<div class="a" style="left:896.5px;top:669px;width:1px;height:15px;background:#e0e0e0;"></div>
<div class="a" style="left:1003.5px;top:669px;width:1px;height:15px;background:#e0e0e0;"></div>
<div class="a" style="left:1051px;top:669px;width:1px;height:15px;background:#e0e0e0;"></div>
<div class="a" style="left:1052.5px;top:668px;width:25.0px;height:16px;background:#f4f4f4;border-left:1px solid #fff;border-top:1px solid #fff;border-right:1px solid #888;border-bottom:1.500px solid #777"></div>
<div class="a" style="left:1078.5px;top:668px;width:25.0px;height:16px;background:#f4f4f4;border-left:1px solid #fff;border-top:1px solid #fff;border-right:1px solid #888;border-bottom:1.500px solid #777"></div>
<div class="a" style="left:1104.5px;top:668px;width:25.0px;height:16px;background:#f4f4f4;border-left:1px solid #fff;border-top:1px solid #fff;border-right:1px solid #888;border-bottom:1.500px solid #777"></div>
<div class="a" style="left:1130.5px;top:668px;width:24.5px;height:16px;background:#f4f4f4;border-left:1px solid #fff;border-top:1px solid #fff;border-right:1px solid #888;border-bottom:1.500px solid #777"></div>
<div class="a" style="left:1156px;top:668px;width:24px;height:16px;background:#f4f4f4;border-left:1px solid #fff;border-top:1px solid #fff;border-right:1px solid #888;border-bottom:1.500px solid #777"></div>
<div class="a" style="left:1181px;top:668px;width:24px;height:16px;background:#f4f4f4;border-left:1px solid #fff;border-top:1px solid #fff;border-right:1px solid #888;border-bottom:1.500px solid #777"></div>
<div class="a" style="left:1206px;top:668px;width:22px;height:16px;background:#f4f4f4;border-left:1px solid #fff;border-top:1px solid #fff;border-right:1px solid #888;border-bottom:1.500px solid #777"></div>
<div class="a" style="left:1229px;top:668px;width:26px;height:18px;background:#808080;"></div>
<div class="a" style="left:1255px;top:668px;width:25px;height:18px;background:#fff;"></div>
<svg style="left:1060px;top:670px" width="12" height="12" viewBox="0 0 12 12"><rect x="0" y="0" width="3" height="2" fill="#d02020"/><rect x="4.500" y="0" width="3" height="2" fill="#d02020"/><rect x="9" y="0" width="3" height="2" fill="#d02020"/><rect x="0" y="3.500" width="5.500" height="2.200" fill="#108080"/><rect x="6.500" y="3.500" width="5.500" height="2.200" fill="#108080"/><rect x="0" y="6.700" width="5.500" height="2.200" fill="#108080"/><rect x="6.500" y="6.700" width="5.500" height="2.200" fill="#108080"/><rect x="0" y="9.800" width="5.500" height="2.200" fill="#108080"/><rect x="6.500" y="9.800" width="5.500" height="2.200" fill="#108080"/></svg>
<svg style="left:1084px;top:671px" width="13" height="10" viewBox="0 0 13 10"><path d="M1 10l4.500-10" stroke="#900090" stroke-width="1.800"/><path d="M7 3.500l5 5M12 3.500l-5 5" stroke="#900090" stroke-width="1.600"/></svg>
<div class="t" style="left:1111px;top:668px;font-family:'Liberation Sans',sans-serif;font-style:italic;font-weight:bold;font-size:15px;color:#1010f0;transform:scaleX(.78);transform-origin:0 0">C</div>
<svg style="left:1134.5px;top:669px" width="14" height="13" viewBox="0 0 14 13"><path d="M3.500 0v13M10.500 0v13M3.500 3h7M3.500 9.500h7" stroke="#111" stroke-width=".9" fill="none"/><path d="M3.500 .8l2.400 2.400l-2.400 2.400l-2.400-2.400z" fill="#b8f000" stroke="#18a018" stroke-width=".8"/><path d="M10.500 7l2.400 2.400l-2.400 2.400l-2.400-2.400z" fill="#b8f000" stroke="#18a018" stroke-width=".8"/><rect x="8" y="1.300" width="4.500" height="3.400" rx="1" fill="#f02010"/><rect x=".8" y="7.700" width="4.500" height="3.400" rx="1" fill="#f02010"/></svg>
<div class="t" style="left:1159.500px;top:668.500px;font-family:'Liberation Sans',sans-serif;font-style:italic;font-weight:bold;font-size:13.500px;color:#1010f0">G</div>
<svg style="left:1167px;top:669.5px" width="8" height="13" viewBox="0 0 8 13"><path d="M4 0v13" stroke="#111" stroke-width=".9"/><rect x="1.500" y="1" width="5" height="3.200" rx="1" fill="#f02010"/><path d="M4 6l2.600 2.600l-2.600 2.600l-2.600-2.600z" fill="#b8f000" stroke="#18a018" stroke-width=".8"/></svg>
<svg style="left:1185.5px;top:669.5px" width="8" height="13" viewBox="0 0 8 13"><rect x=".6" y=".6" width="6.800" height="11.800" fill="#f4f8ff" stroke="#2828a8" stroke-width="1.200"/><rect x=".6" y=".6" width="6.800" height="2" fill="#2828a8"/><rect x="5.500" y="0" width="2.500" height="2" fill="#20c0f0"/><path d="M2 8.500h1.500M4.500 8.500h1.500" stroke="#c0a020" stroke-width="1.200"/><path d="M2 5.500h4" stroke="#b0d0f0" stroke-width="1"/></svg>
<svg style="left:1209.5px;top:670px" width="14" height="9" viewBox="0 0 14 9"><rect x=".6" y=".6" width="12.800" height="7.800" fill="#f4f8ff" stroke="#2828a8" stroke-width="1.200"/><rect x=".6" y=".6" width="12.800" height="2" fill="#2828a8"/><rect x="11" y="0" width="2.500" height="2" fill="#20c0f0"/><path d="M2.500 5.500h3.500M8 5.500h3.500" stroke="#c0a020" stroke-width="1.200" stroke-dasharray="1.500 .7"/></svg>
<svg style="left:1233.5px;top:669.7px" width="14" height="13" viewBox="0 0 14 13"><rect x=".6" y=".6" width="12.800" height="10.800" fill="#f4f8ff" stroke="#2828a8" stroke-width="1.200"/><rect x=".6" y=".6" width="12.800" height="2.200" fill="#2828a8"/><rect x="11" y="0" width="2.500" height="2" fill="#20c0f0"/><path d="M2.500 8h3.500M8 8h3.500" stroke="#c0a020" stroke-width="1.200" stroke-dasharray="1.500 .7"/><path d="M2.500 5.200h9" stroke="#b0d0f0" stroke-width="1"/></svg>
<svg style="left:1259.5px;top:668px" width="16" height="16" viewBox="0 0 16 16"><circle cx="8" cy="8" r="7" fill="#fff" stroke="#1818a0" stroke-width="1.500"/><text x="8" y="12.500" font-family="Liberation Sans,sans-serif" font-weight="bold" font-size="12.500" fill="#1818e0" text-anchor="middle">?</text></svg>
</body></html>
